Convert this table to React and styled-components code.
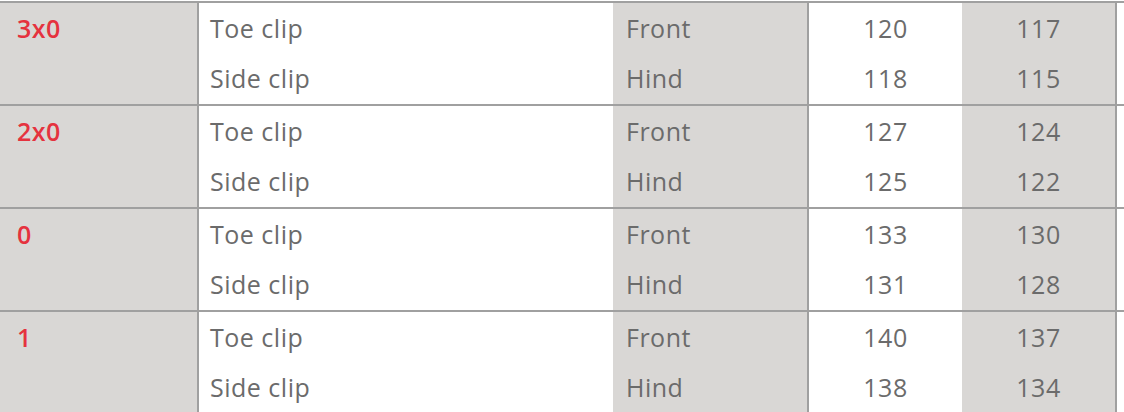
import React from 'react';
import styled, { createGlobalStyle } from 'styled-components';

// # GLOBAL
const GlobalStyle = createGlobalStyle`
    body {
        margin: 0;
        background: #ffffff;
        font-family: "Open Sans", "Noto Sans", sans-serif;
    }
`;

// # DATA
const groups = [
    { label: '3x0', rows: [['Toe clip', 'Front', '120', '117'], ['Side clip', 'Hind', '118', '115']] },
    { label: '2x0', rows: [['Toe clip', 'Front', '127', '124'], ['Side clip', 'Hind', '125', '122']] },
    { label: '0', rows: [['Toe clip', 'Front', '133', '130'], ['Side clip', 'Hind', '131', '128']] },
    { label: '1', rows: [['Toe clip', 'Front', '140', '137'], ['Side clip', 'Hind', '138', '134']] },
];

// # STYLED
const Table = styled.div`
    padding-top: 1px;
    width: 1124px;
`;
const Group = styled.div`
    display: grid;
    grid-template-columns: 199px 414px 196px 153px 155px 1fr;
    border-top: 2px solid #a0a0a0;
`;
const Cell = styled.div`
    box-sizing: border-box;
    padding-left: ${(p) => p.$indent || 0}px;
    background: ${(p) => (p.$shade ? '#d9d7d5' : '#ffffff')};
    border-right: ${(p) => (p.$divider ? '2px solid #a0a0a0' : 'none')};
    text-align: ${(p) => (p.$center ? 'center' : 'left')};
    height: 101px;
`;
const Line = styled.div`
    height: 50px;
    line-height: 50px;
    font-size: 25px;
    letter-spacing: 0.5px;
    color: #6b6b6b;
    white-space: nowrap;
`;
const Label = styled(Line)`
    color: #e5323e;
    font-weight: 600;
`;

// # COMPONENT
export default function App() {
    return (
        <>
            <GlobalStyle />
            <Table>
                {groups.map((g) => (
                    <Group key={g.label}>
                        <Cell $shade $divider $indent={17}>
                            <Label>{g.label}</Label>
                        </Cell>
                        <Cell $indent={11}>
                            {g.rows.map((r) => <Line key={r[0]}>{r[0]}</Line>)}
                        </Cell>
                        <Cell $shade $divider $indent={13}>
                            {g.rows.map((r) => <Line key={r[1]}>{r[1]}</Line>)}
                        </Cell>
                        <Cell $center>
                            {g.rows.map((r) => <Line key={r[2]}>{r[2]}</Line>)}
                        </Cell>
                        <Cell $shade $divider $center>
                            {g.rows.map((r) => <Line key={r[3]}>{r[3]}</Line>)}
                        </Cell>
                        <Cell />
                    </Group>
                ))}
            </Table>
        </>
    );
}
